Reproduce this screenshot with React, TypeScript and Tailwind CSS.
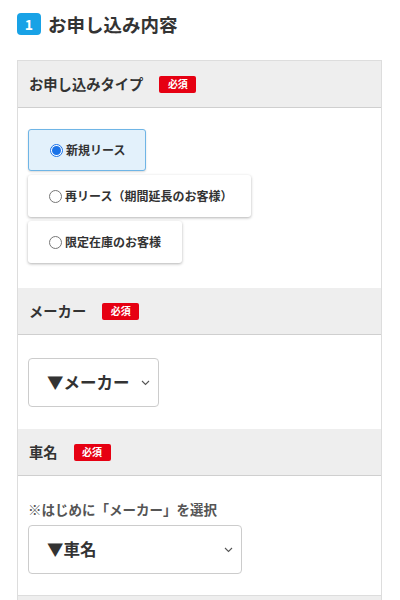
import React from "react";

const font = { fontFamily: '"Noto Sans CJK JP", "Noto Sans", sans-serif' };

function Req() {
  return (
    <span className="ml-[16px] inline-flex h-[17px] w-[37px] items-center justify-center rounded-[2px] bg-[#e60012] text-[10px] font-bold leading-none text-white">
      必須
    </span>
  );
}

function Header({ label }: { label: string }) {
  return (
    <div className="flex h-[47px] items-center border-b border-[#cfcfcf] bg-[#eeeeee] pl-[11px]">
      <span className="text-[14.3px] font-bold leading-none text-[#333]">{label}</span>
      <Req />
    </div>
  );
}

function Radio({ checked }: { checked?: boolean }) {
  return checked ? (
    <span className="flex h-[13px] w-[13px] items-center justify-center rounded-full border border-[#1a73e8] bg-white">
      <span className="h-[9px] w-[9px] rounded-full bg-[#1a73e8]" />
    </span>
  ) : (
    <span className="h-[13px] w-[13px] rounded-full border border-[#777] bg-white" />
  );
}

function Option({ label, checked, w }: { label: string; checked?: boolean; w: string }) {
  return (
    <div
      className={
        checked
          ? `flex h-[42px] ${w} items-center gap-[3px] rounded-[3px] border border-[#6fb5e6] bg-[#e3f1fb] pl-[21px] shadow-[0_1px_2px_rgba(0,0,0,0.15)]`
          : `flex h-[42px] ${w} items-center gap-[3px] rounded-[3px] bg-white pl-[21px] shadow-[0_1px_3px_rgba(0,0,0,0.3)]`
      }
    >
      <Radio checked={checked} />
      <span className="text-[12px] font-bold leading-none text-[#333]">{label}</span>
    </div>
  );
}

function Select({ label, w }: { label: string; w: string }) {
  return (
    <div className={`flex h-[49px] ${w} items-center justify-between rounded-[4px] border border-[#cccccc] bg-white pl-[18px] pr-[8px]`}>
      <span className="text-[16.5px] font-bold leading-none text-[#333]">{label}</span>
      <svg width="9" height="6" viewBox="0 0 9 6" fill="none">
        <path d="M1 1l3.5 3.5L8 1" stroke="#555" strokeWidth="1.1" />
      </svg>
    </div>
  );
}

export default function App() {
  return (
    <div style={font} className="h-[600px] w-[400px] overflow-hidden bg-white">
      <div className="flex items-center pl-[17px] pt-[13px]">
        <span className="flex h-[22px] w-[24px] items-center justify-center rounded-[4px] bg-[#18a2e6] text-[14px] font-bold leading-none text-white">
          1
        </span>
        <span className="ml-[7px] text-[18.5px] font-bold leading-none text-[#333]">お申し込み内容</span>
      </div>
      <div className="ml-[17px] mt-[25px] w-[365px] border-x border-t border-[#dddddd]">
        <Header label="お申し込みタイプ" />
        <div className="flex flex-col gap-[4px] pb-[25px] pl-[10px] pt-[21px]">
          <Option label="新規リース" checked w="w-[118px]" />
          <Option label="再リース（期間延長のお客様）" w="w-[223px]" />
          <Option label="限定在庫のお客様" w="w-[154px]" />
        </div>
        <Header label="メーカー" />
        <div className="pb-[22px] pl-[10px] pt-[23px]">
          <Select label="▼メーカー" w="w-[131px]" />
        </div>
        <Header label="車名" />
        <div className="pb-[21px] pl-[10px] pt-[23px]">
          <div className="text-[13.5px] font-bold leading-[20px] text-[#555]">※はじめに「メーカー」を選択</div>
          <div className="mt-[6px]">
            <Select label="▼車名" w="w-[214px]" />
          </div>
        </div>
        <div className="h-[47px] border-t border-[#dddddd] bg-[#eeeeee]" />
      </div>
    </div>
  );
}
